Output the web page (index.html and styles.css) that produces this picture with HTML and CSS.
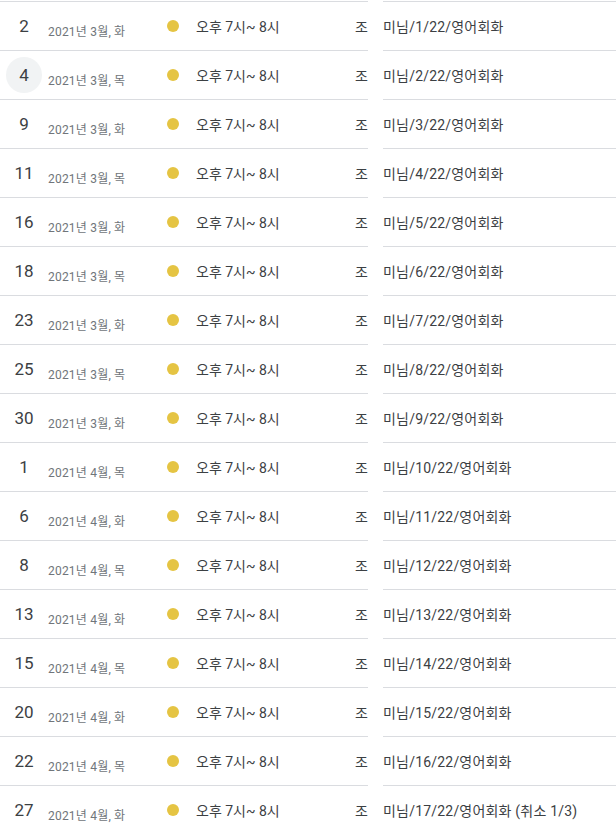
FILE: index.html
```html
<!DOCTYPE html>
<html lang="ko">
<head>
    <meta charset="UTF-8">
    <meta name="viewport" content="width=device-width, initial-scale=1.0">
    <title>일정 목록</title>
    <link rel="stylesheet" href="styles.css">
</head>
<body>

<div class="schedule">
    <div class="row">
        <div class="main">
            <div class="day">2</div>
            <div class="date">2021년 3월, 화</div>
            <span class="dot"></span>
            <div class="time">오후 7시~ 8시</div>
            <div class="tag">조</div>
        </div>
        <div class="title">미님/1/22/영어회화</div>
    </div>
    <div class="row">
        <div class="main">
            <div class="day today">4</div>
            <div class="date">2021년 3월, 목</div>
            <span class="dot"></span>
            <div class="time">오후 7시~ 8시</div>
            <div class="tag">조</div>
        </div>
        <div class="title">미님/2/22/영어회화</div>
    </div>
    <div class="row">
        <div class="main">
            <div class="day">9</div>
            <div class="date">2021년 3월, 화</div>
            <span class="dot"></span>
            <div class="time">오후 7시~ 8시</div>
            <div class="tag">조</div>
        </div>
        <div class="title">미님/3/22/영어회화</div>
    </div>
    <div class="row">
        <div class="main">
            <div class="day">11</div>
            <div class="date">2021년 3월, 목</div>
            <span class="dot"></span>
            <div class="time">오후 7시~ 8시</div>
            <div class="tag">조</div>
        </div>
        <div class="title">미님/4/22/영어회화</div>
    </div>
    <div class="row">
        <div class="main">
            <div class="day">16</div>
            <div class="date">2021년 3월, 화</div>
            <span class="dot"></span>
            <div class="time">오후 7시~ 8시</div>
            <div class="tag">조</div>
        </div>
        <div class="title">미님/5/22/영어회화</div>
    </div>
    <div class="row">
        <div class="main">
            <div class="day">18</div>
            <div class="date">2021년 3월, 목</div>
            <span class="dot"></span>
            <div class="time">오후 7시~ 8시</div>
            <div class="tag">조</div>
        </div>
        <div class="title">미님/6/22/영어회화</div>
    </div>
    <div class="row">
        <div class="main">
            <div class="day">23</div>
            <div class="date">2021년 3월, 화</div>
            <span class="dot"></span>
            <div class="time">오후 7시~ 8시</div>
            <div class="tag">조</div>
        </div>
        <div class="title">미님/7/22/영어회화</div>
    </div>
    <div class="row">
        <div class="main">
            <div class="day">25</div>
            <div class="date">2021년 3월, 목</div>
            <span class="dot"></span>
            <div class="time">오후 7시~ 8시</div>
            <div class="tag">조</div>
        </div>
        <div class="title">미님/8/22/영어회화</div>
    </div>
    <div class="row">
        <div class="main">
            <div class="day">30</div>
            <div class="date">2021년 3월, 화</div>
            <span class="dot"></span>
            <div class="time">오후 7시~ 8시</div>
            <div class="tag">조</div>
        </div>
        <div class="title">미님/9/22/영어회화</div>
    </div>
    <div class="row">
        <div class="main">
            <div class="day">1</div>
            <div class="date">2021년 4월, 목</div>
            <span class="dot"></span>
            <div class="time">오후 7시~ 8시</div>
            <div class="tag">조</div>
        </div>
        <div class="title">미님/10/22/영어회화</div>
    </div>
    <div class="row">
        <div class="main">
            <div class="day">6</div>
            <div class="date">2021년 4월, 화</div>
            <span class="dot"></span>
            <div class="time">오후 7시~ 8시</div>
            <div class="tag">조</div>
        </div>
        <div class="title">미님/11/22/영어회화</div>
    </div>
    <div class="row">
        <div class="main">
            <div class="day">8</div>
            <div class="date">2021년 4월, 목</div>
            <span class="dot"></span>
            <div class="time">오후 7시~ 8시</div>
            <div class="tag">조</div>
        </div>
        <div class="title">미님/12/22/영어회화</div>
    </div>
    <div class="row">
        <div class="main">
            <div class="day">13</div>
            <div class="date">2021년 4월, 화</div>
            <span class="dot"></span>
            <div class="time">오후 7시~ 8시</div>
            <div class="tag">조</div>
        </div>
        <div class="title">미님/13/22/영어회화</div>
    </div>
    <div class="row">
        <div class="main">
            <div class="day">15</div>
            <div class="date">2021년 4월, 목</div>
            <span class="dot"></span>
            <div class="time">오후 7시~ 8시</div>
            <div class="tag">조</div>
        </div>
        <div class="title">미님/14/22/영어회화</div>
    </div>
    <div class="row">
        <div class="main">
            <div class="day">20</div>
            <div class="date">2021년 4월, 화</div>
            <span class="dot"></span>
            <div class="time">오후 7시~ 8시</div>
            <div class="tag">조</div>
        </div>
        <div class="title">미님/15/22/영어회화</div>
    </div>
    <div class="row">
        <div class="main">
            <div class="day">22</div>
            <div class="date">2021년 4월, 목</div>
            <span class="dot"></span>
            <div class="time">오후 7시~ 8시</div>
            <div class="tag">조</div>
        </div>
        <div class="title">미님/16/22/영어회화</div>
    </div>
    <div class="row">
        <div class="main">
            <div class="day">27</div>
            <div class="date">2021년 4월, 화</div>
            <span class="dot"></span>
            <div class="time">오후 7시~ 8시</div>
            <div class="tag">조</div>
        </div>
        <div class="title">미님/17/22/영어회화 (취소 1/3)</div>
    </div>
</div>

</body>
</html>
```

FILE: styles.css
```css
body {
    margin: 0;
    padding-top: 1px;
    background-color: #ffffff;
    font-family: Roboto, "Noto Sans CJK KR", sans-serif;
    color: #3c4043;
}
.schedule {
    width: 616px;
}
.row {
    display: flex;
    gap: 15px;
    height: 49px;
}
.main {
    display: flex;
    align-items: center;
    width: 368px;
    border-top: 1px solid #dadce0;
}
.title {
    flex-grow: 1;
    display: flex;
    align-items: center;
    border-top: 1px solid #dadce0;
    font-size: 14px;
    letter-spacing: 0.2px;
}
.day {
    width: 36px;
    height: 36px;
    margin: 0 6px;
    border-radius: 50%;
    display: flex;
    align-items: center;
    justify-content: center;
    font-size: 17px;
}
.day.today {
    background-color: #f1f3f4;
}
.date {
    width: 119px;
    margin-top: 9px;
    font-size: 12px;
    letter-spacing: 0.2px;
    color: #70757a;
}
.dot {
    width: 12px;
    height: 12px;
    border-radius: 50%;
    background-color: #e5c443;
    margin-right: 17px;
}
.time {
    flex-grow: 1;
    font-size: 14px;
}
.tag {
    font-size: 14px;
}
```
